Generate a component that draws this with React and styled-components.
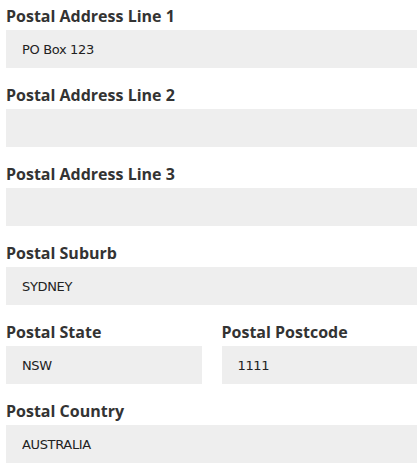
import React from "react";
import styled, { createGlobalStyle } from "styled-components";

const Global = createGlobalStyle`
  html, body { margin: 0; padding: 0; background: #fff; }
  body { padding: 5px 2px 0 6px; }
`;

const Form = styled.form`
  display: flex;
  flex-direction: column;
  gap: 16px;
  width: 411px;
`;

const Row = styled.div`
  display: grid;
  grid-template-columns: 1fr 1fr;
  column-gap: 20px;
`;

const Field = styled.div`
  display: flex;
  flex-direction: column;
  gap: 3px;
  min-width: 0;
`;

const Label = styled.label`
  font-family: "Open Sans", sans-serif;
  font-weight: 700;
  font-size: 16px;
  line-height: 22px;
  color: #333;
`;

const Input = styled.input`
  box-sizing: border-box;
  height: 38px;
  width: 100%;
  border: none;
  outline: none;
  background: #eeeeee;
  padding: 0 16px;
  font-family: "DejaVu Sans", Verdana, sans-serif;
  font-size: 13px;
  letter-spacing: -0.35px;
  color: #222;
  margin: 0;
`;

function TextField({ label, value }) {
  return (
    <Field>
      <Label>{label}</Label>
      <Input type="text" defaultValue={value} />
    </Field>
  );
}

export default function App() {
  return (
    <>
      <Global />
      <Form onSubmit={(e) => e.preventDefault()}>
        <TextField label="Postal Address Line 1" value="PO Box 123" />
        <TextField label="Postal Address Line 2" value="" />
        <TextField label="Postal Address Line 3" value="" />
        <TextField label="Postal Suburb" value="SYDNEY" />
        <Row>
          <TextField label="Postal State" value="NSW" />
          <TextField label="Postal Postcode" value="1111" />
        </Row>
        <TextField label="Postal Country" value="AUSTRALIA" />
      </Form>
    </>
  );
}
